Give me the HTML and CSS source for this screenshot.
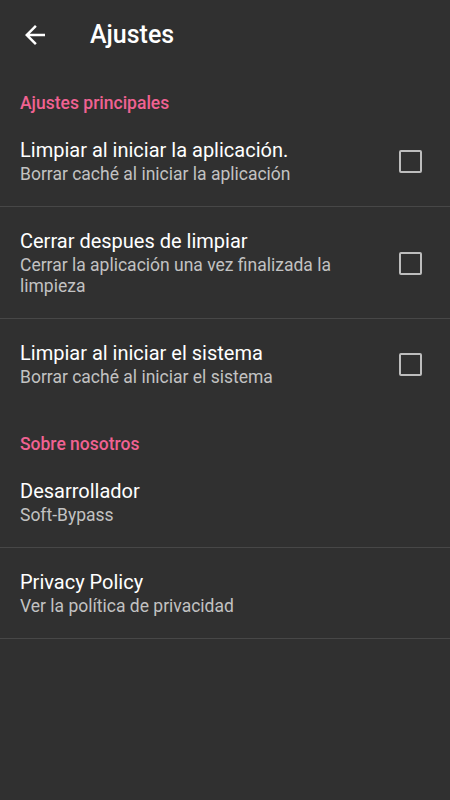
FILE: index.html
```html
<!DOCTYPE html>
<html lang="es">
<head>
<meta charset="utf-8">
<title>Ajustes</title>
<link rel="stylesheet" href="styles.css">
</head>
<body>
<header class="toolbar">
  <span class="back" aria-label="Atrás">
    <svg viewBox="0 0 24 24" width="30" height="30"><path fill="#ffffff" d="M20 11H7.83l5.59-5.59L12 4l-8 8 8 8 1.41-1.41L7.83 13H20v-2z"/></svg>
  </span>
  <h1 class="title">Ajustes</h1>
</header>

<section class="group">
  <div class="category">Ajustes principales</div>
  <div class="item">
    <div class="texts">
      <div class="item-title">Limpiar al iniciar la aplicación.</div>
      <div class="item-summary">Borrar caché al iniciar la aplicación</div>
    </div>
    <span class="checkbox"></span>
  </div>
  <div class="item">
    <div class="texts">
      <div class="item-title">Cerrar despues de limpiar</div>
      <div class="item-summary">Cerrar la aplicación una vez finalizada la limpieza</div>
    </div>
    <span class="checkbox"></span>
  </div>
  <div class="item item-last">
    <div class="texts">
      <div class="item-title">Limpiar al iniciar el sistema</div>
      <div class="item-summary">Borrar caché al iniciar el sistema</div>
    </div>
    <span class="checkbox"></span>
  </div>
</section>

<section class="group group-next">
  <div class="category">Sobre nosotros</div>
  <div class="item">
    <div class="texts">
      <div class="item-title">Desarrollador</div>
      <div class="item-summary">Soft-Bypass</div>
    </div>
  </div>
  <div class="item">
    <div class="texts">
      <div class="item-title">Privacy Policy</div>
      <div class="item-summary">Ver la política de privacidad</div>
    </div>
  </div>
</section>
</body>
</html>
```

FILE: styles.css
```css
html, body {
  margin: 0;
  padding: 0;
  background: #303030;
  height: 100%;
}
body {
  font-family: Roboto, "Noto Sans", "Liberation Sans", sans-serif;
  color: #ffffff;
}
.toolbar {
  height: 70px;
  display: flex;
  align-items: center;
}
.back {
  width: 30px;
  height: 30px;
  margin-left: 20px;
  display: block;
}
.back svg {
  display: block;
}
.title {
  margin: 0 0 0 40px;
  font-size: 25px;
  font-weight: 500;
  line-height: 30px;
  color: #ffffff;
}
.category {
  padding: 23px 20px 3px;
  font-size: 17.5px;
  line-height: 20px;
  font-weight: 500;
  color: #f06292;
}
.group-next .category {
  padding-top: 24px;
}
.item {
  display: flex;
  align-items: center;
  padding: 22px 28px 21px 20px;
  border-bottom: 1px solid #474747;
}
.item-last {
  border-bottom-color: transparent;
}
.texts {
  flex: 1;
  min-width: 0;
  margin-right: 40px;
}
.item-title {
  font-size: 20px;
  line-height: 24px;
  color: #ffffff;
}
.item-summary {
  margin-top: 2px;
  font-size: 17.5px;
  line-height: 21px;
  color: #c2c2c2;
}
.checkbox {
  width: 23px;
  height: 23px;
  box-sizing: border-box;
  border: 2.5px solid #bdbdbd;
  border-radius: 2px;
  flex: none;
}
```
